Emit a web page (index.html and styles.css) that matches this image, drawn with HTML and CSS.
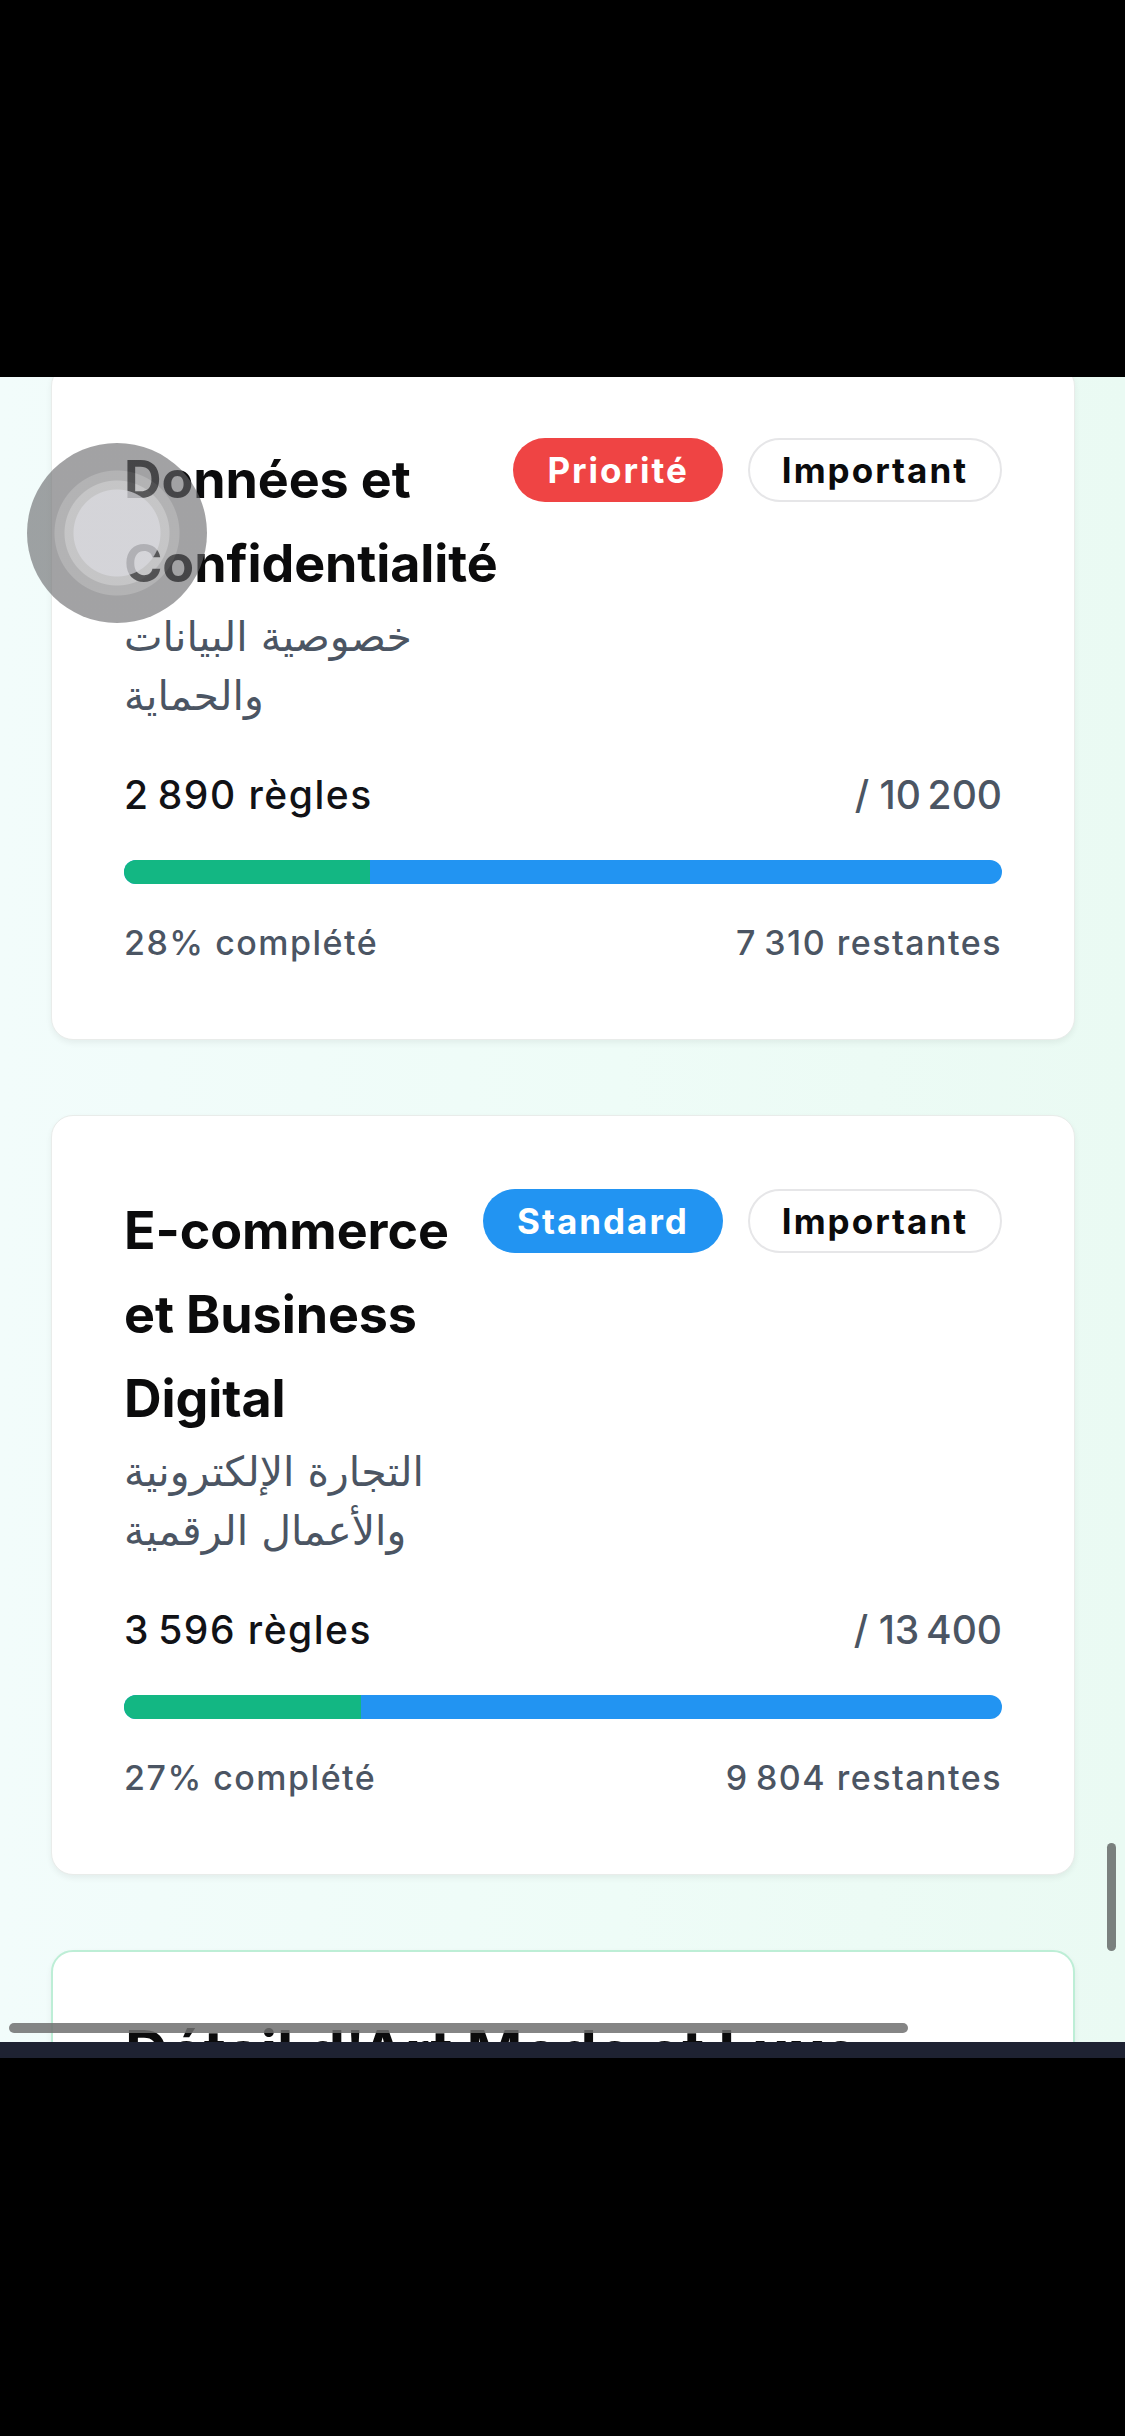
FILE: index.html
```html
<!DOCTYPE html>
<html lang="fr">
<head>
<meta charset="utf-8">
<title>Catégories</title>
<link rel="stylesheet" href="styles.css">
</head>
<body>
<div class="screen">
  <div class="top-black"></div>
  <div class="viewport">
    <div class="scroll-content">
      <section class="card">
        <div class="card-head">
          <div class="titles">
            <h2 class="title">Données et Confidentialité</h2>
            <p class="subtitle" dir="rtl">خصوصية البيانات والحماية</p>
          </div>
          <div class="badges">
            <span class="badge badge-red">Priorité</span>
            <span class="badge badge-outline">Important</span>
          </div>
        </div>
        <div class="counts"><span class="count">2&#8239;890 règles</span><span class="total">/ 10&#8239;200</span></div>
        <div class="bar"><div class="bar-fill" style="width:28%"></div></div>
        <div class="meta"><span>28% complété</span><span>7&#8239;310 restantes</span></div>
      </section>

      <section class="card">
        <div class="card-head">
          <div class="titles">
            <h2 class="title">E-commerce et Business Digital</h2>
            <p class="subtitle" dir="rtl">التجارة الإلكترونية والأعمال الرقمية</p>
          </div>
          <div class="badges">
            <span class="badge badge-blue">Standard</span>
            <span class="badge badge-outline">Important</span>
          </div>
        </div>
        <div class="counts"><span class="count">3&#8239;596 règles</span><span class="total">/ 13&#8239;400</span></div>
        <div class="bar"><div class="bar-fill" style="width:27%"></div></div>
        <div class="meta"><span>27% complété</span><span>9&#8239;804 restantes</span></div>
      </section>

      <section class="card card-active">
        <div class="card-head">
          <div class="titles">
            <h2 class="title">Détail d'Art Mode et Luxe</h2>
          </div>
        </div>
      </section>
    </div>
    <div class="touch"></div>
    <div class="hscroll"></div>
    <div class="vscroll"></div>
  </div>
  <div class="nav-strip"></div>
  <div class="bottom-black"></div>
</div>
</body>
</html>
```

FILE: styles.css
```css
* { box-sizing: border-box; }
html, body { margin: 0; padding: 0; background: #000; }
body { font-family: Inter, "Noto Sans", "DejaVu Sans", sans-serif; }

.screen {
  width: 1125px;
  height: 2436px;
  display: flex;
  flex-direction: column;
  overflow: hidden;
}
.top-black { height: 377px; flex: none; background: #000; }

.viewport {
  position: relative;
  height: 1665px;
  flex: none;
  overflow: hidden;
  background: linear-gradient(90deg, #f2fcfb 0%, #eefcf7 55%, #eafaf3 100%);
}
.scroll-content {
  margin-top: -13px;
  padding: 0 50px 0 51px;
  display: flex;
  flex-direction: column;
  gap: 75px;
}

.card {
  background: #fff;
  border: 1px solid #e9ecea;
  border-radius: 22px;
  box-shadow: 0 3px 6px rgba(0, 0, 0, 0.06);
  padding: 73px 72px 76px 72px;
}
.card-active { border: 2px solid #bdeed6; padding-top: 58px; }

.card-head {
  display: flex;
  align-items: flex-start;
  gap: 16px;
}
.titles { flex: 1; min-width: 0; }
.title {
  margin: 0;
  font-family: Inter, sans-serif;
  font-weight: 700;
  font-size: 52px;
  line-height: 84px;
  letter-spacing: -0.1px;
  color: #0b0b0c;
}
.card-active .title { font-size: 60px; }
.subtitle {
  margin: 2px 0 0 0;
  font-family: "DejaVu Sans", sans-serif;
  font-size: 41px;
  line-height: 59px;
  color: #4b5563;
  text-align: left;
}

.badges { display: flex; gap: 25px; flex: none; }
.badge {
  height: 64px;
  padding: 0 34px;
  border-radius: 32px;
  display: flex;
  align-items: center;
  font-family: Inter, sans-serif;
  font-weight: 700;
  font-size: 35px;
  letter-spacing: 2px;
  white-space: nowrap;
}
.badge-red { background: #ef4444; color: #fff; }
.badge-blue { background: #2294f2; color: #fff; }
.badge-outline {
  background: #fff;
  color: #0b0b0c;
  border: 2px solid #e6e6e8;
  padding: 0 32px;
}

.counts {
  margin-top: 46px;
  display: flex;
  justify-content: space-between;
  font-size: 39px;
  line-height: 46px;
  font-weight: 500;
  letter-spacing: 1.5px;
}
.count { color: #111216; }
.total { color: #4b5563; }

.bar {
  margin-top: 42px;
  height: 24px;
  border-radius: 12px;
  background: #2294f2;
  overflow: hidden;
}
.bar-fill { height: 100%; background: #13b783; }

.meta {
  margin-top: 39px;
  display: flex;
  justify-content: space-between;
  font-size: 34px;
  line-height: 40px;
  font-weight: 500;
  letter-spacing: 1.5px;
  color: #4b5563;
}

.touch {
  position: absolute;
  left: 27px;
  top: 66px;
  width: 180px;
  height: 180px;
  border-radius: 50%;
  background: radial-gradient(circle,
    rgba(205, 205, 210, 0.85) 0 43px,
    rgba(150, 150, 152, 0.55) 44px 52px,
    rgba(128, 128, 130, 0.6) 53px 62px,
    rgba(105, 105, 108, 0.62) 63px 90px);
}
.hscroll {
  position: absolute;
  left: 9px;
  top: 1646px;
  width: 899px;
  height: 10px;
  border-radius: 5px;
  background: rgba(112, 112, 112, 0.85);
}
.vscroll {
  position: absolute;
  left: 1107px;
  top: 1466px;
  width: 9px;
  height: 108px;
  border-radius: 5px;
  background: #7a807e;
}

.nav-strip { height: 16px; flex: none; background: #1e2232; }
.bottom-black { flex: 1; background: #000; }
```
